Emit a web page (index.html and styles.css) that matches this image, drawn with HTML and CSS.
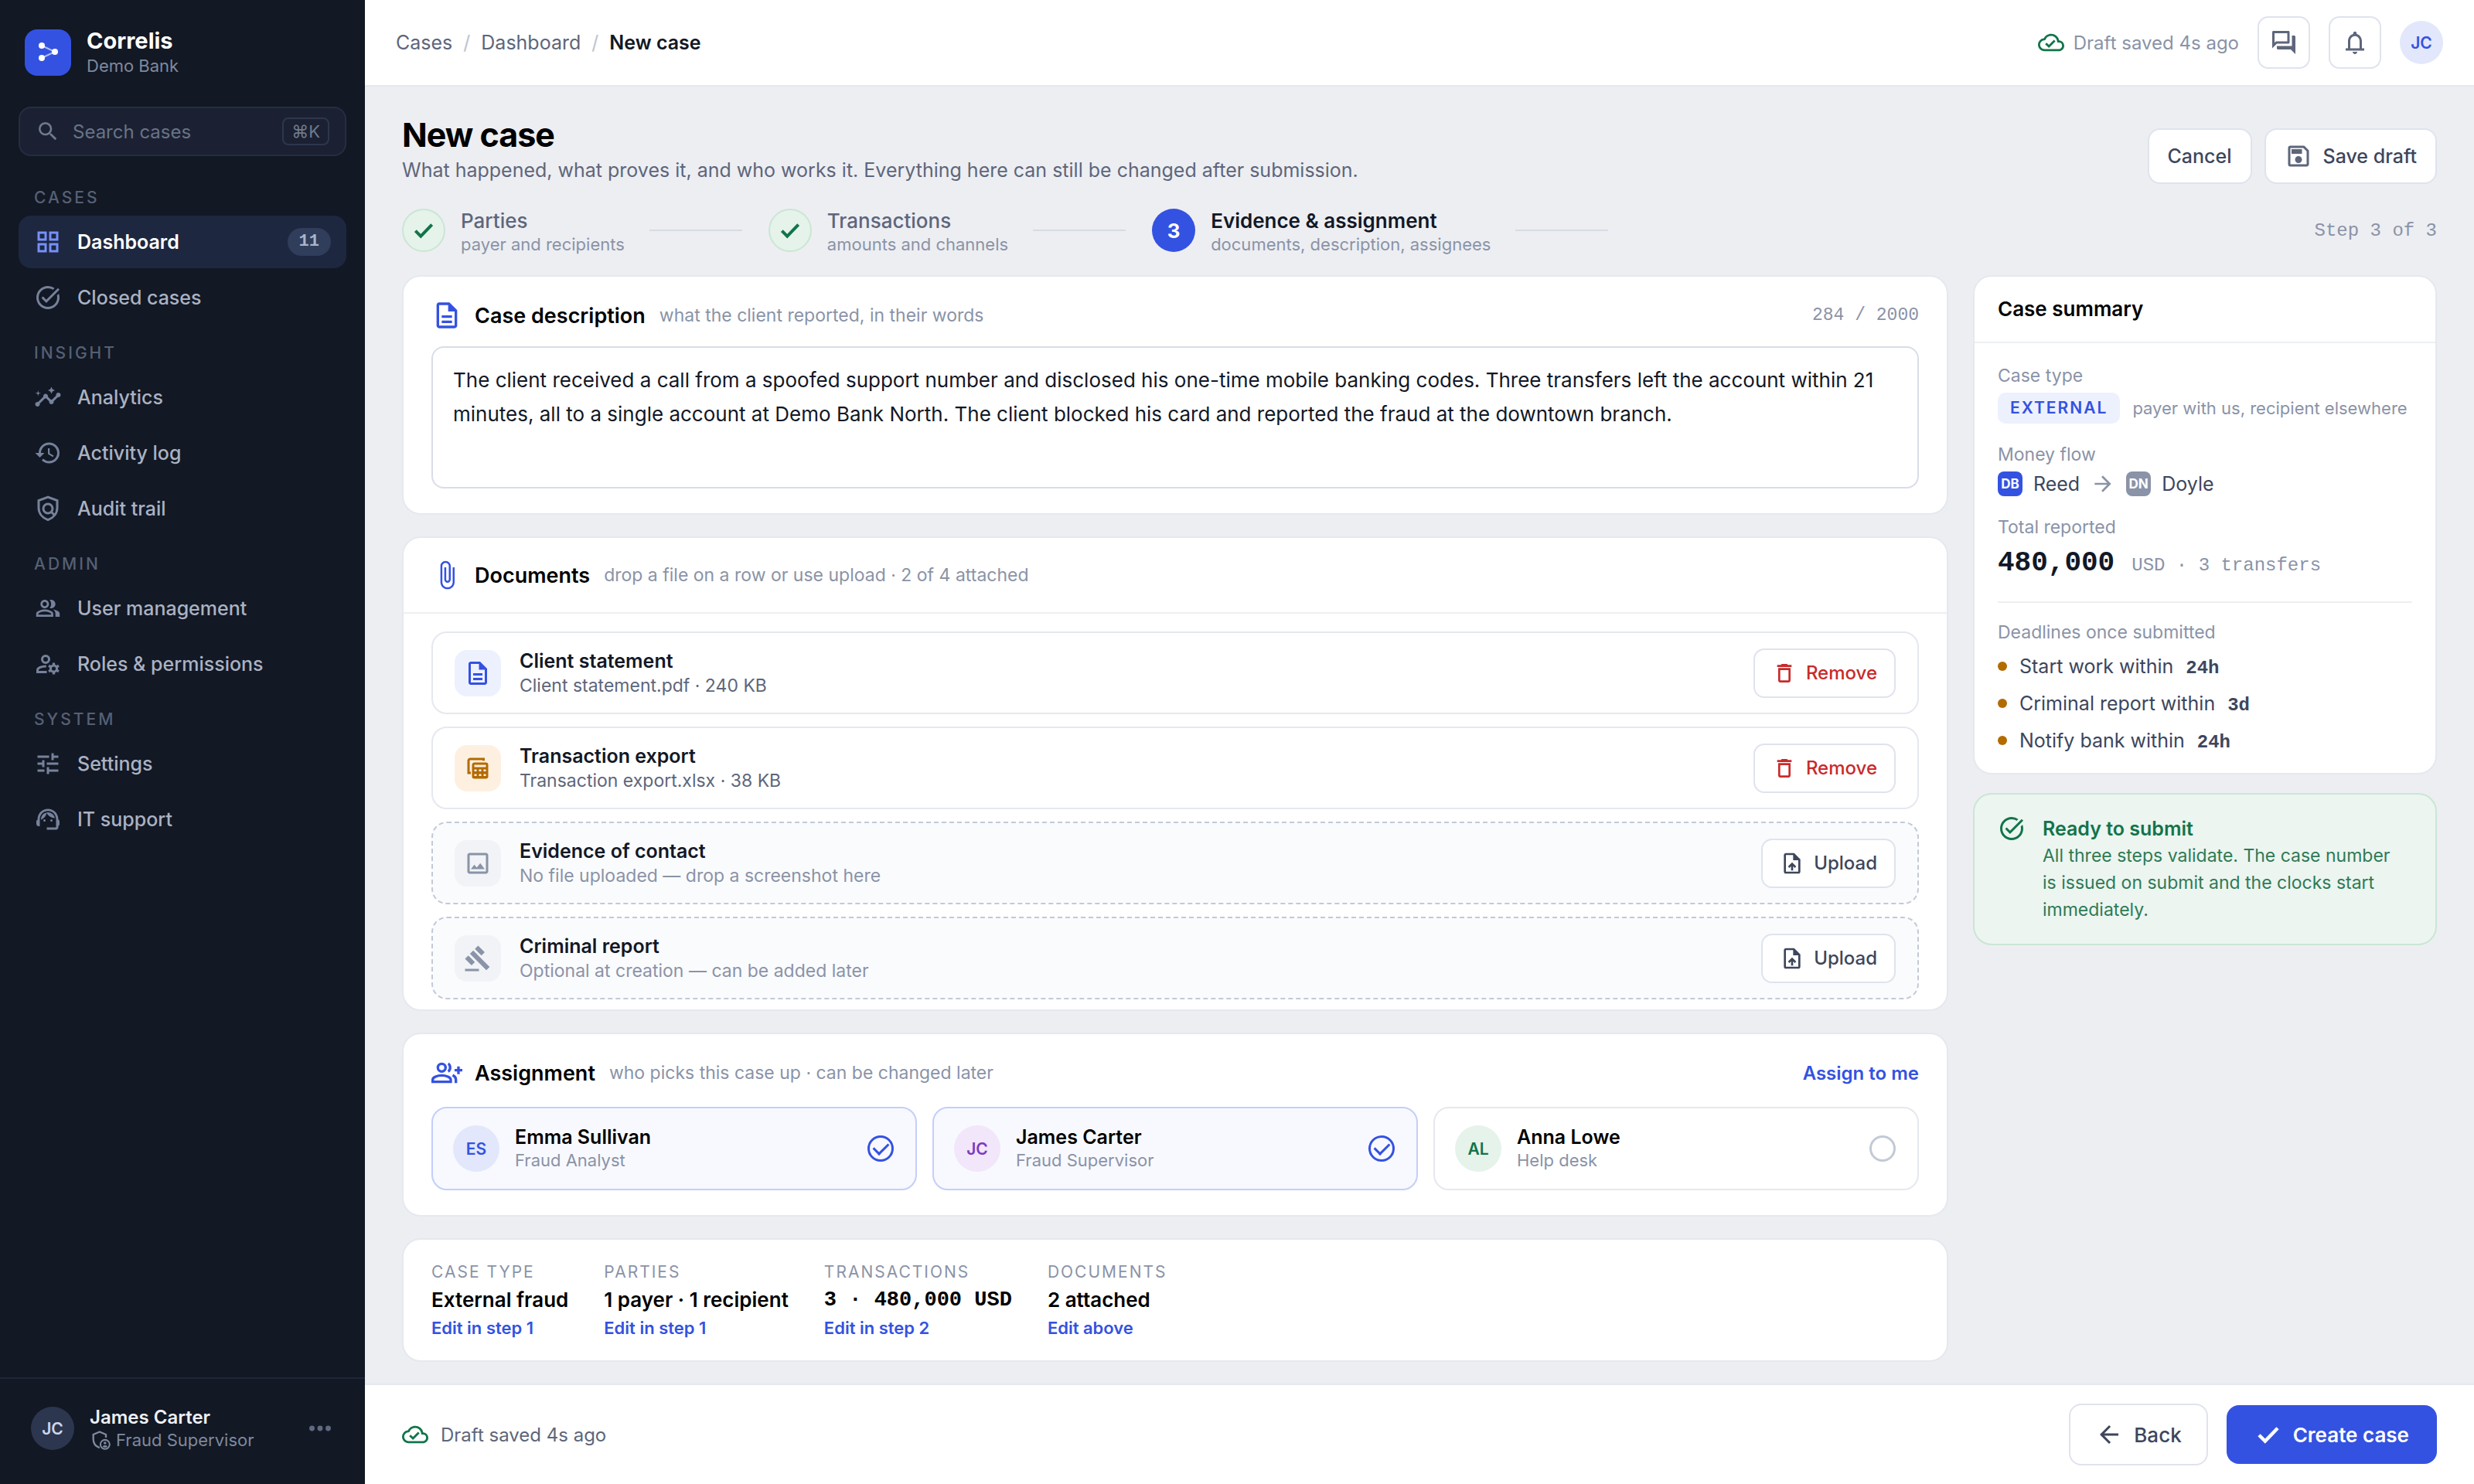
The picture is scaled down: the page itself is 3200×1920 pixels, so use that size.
FILE: index.html
```
<!DOCTYPE html>
<html lang="en">
<head>
  <meta charset="UTF-8" />
  <meta name="viewport" content="width=device-width, initial-scale=1" />
  <title>New case - Correlis</title>
  <link rel="stylesheet" href="styles.css">
</head>
<body>
  <!-- icon sprite -->
  <svg class="sprite" aria-hidden="true">
    <symbol id="i-search" viewBox="0 0 24 24"><path d="M15.5 14h-.79l-.28-.27A6.471 6.471 0 0 0 16 9.5 6.5 6.5 0 1 0 9.5 16c1.61 0 3.09-.59 4.23-1.57l.27.28v.79l5 4.99L20.49 19l-4.99-5zm-6 0C7.01 14 5 11.99 5 9.5S7.01 5 9.5 5 14 7.01 14 9.5 11.99 14 9.5 14z"/></symbol>
    <symbol id="i-grid" viewBox="0 0 24 24"><path d="M3 3v8h8V3H3zm6 6H5V5h4v4zm-6 4v8h8v-8H3zm6 6H5v-4h4v4zm4-16v8h8V3h-8zm6 6h-4V5h4v4zm-6 4v8h8v-8h-8zm6 6h-4v-4h4v4z"/></symbol>
    <symbol id="i-task" viewBox="0 0 24 24"><path d="M22 5.18 10.59 16.6l-4.24-4.24 1.41-1.41 2.83 2.83 10-10L22 5.18zm-2.21 5.04c.13.57.21 1.17.21 1.78 0 4.42-3.58 8-8 8s-8-3.58-8-8 3.58-8 8-8c1.58 0 3.04.46 4.28 1.25l1.44-1.44A9.9 9.9 0 0 0 12 2C6.48 2 2 6.48 2 12s4.48 10 10 10 10-4.48 10-10c0-1.19-.22-2.33-.6-3.39l-1.61 1.61z"/></symbol>
    <symbol id="i-insights" viewBox="0 0 24 24"><path d="M21 8c-1.45 0-2.26 1.44-1.93 2.51l-3.55 3.56c-.3-.09-.74-.09-1.04 0l-2.55-2.55C12.27 10.45 11.46 9 10 9c-1.45 0-2.27 1.44-1.93 2.52l-4.56 4.55C2.44 15.74 1 16.55 1 18c0 1.1.9 2 2 2 1.45 0 2.26-1.44 1.93-2.51l4.55-4.56c.3.09.74.09 1.04 0l2.55 2.55C12.73 16.55 13.54 18 15 18c1.45 0 2.27-1.44 1.93-2.52l3.56-3.55C21.56 12.26 23 11.45 23 10c0-1.1-.9-2-2-2zM15 9l.94-2.07L18 6l-2.06-.93L15 3l-.92 2.07L12 6l2.08.93zM3.5 11 4 9l2-.5L4 8l-.5-2L3 8l-2 .5L3 9z"/></symbol>
    <symbol id="i-history" viewBox="0 0 24 24"><path d="M13 3a9 9 0 0 0-9 9H1l3.89 3.89.07.14L9 12H6c0-3.87 3.13-7 7-7s7 3.13 7 7-3.13 7-7 7c-1.93 0-3.68-.79-4.94-2.06l-1.42 1.42A8.954 8.954 0 0 0 13 21a9 9 0 0 0 0-18zm-1 5v5l4.28 2.54.72-1.21-3.5-2.08V8H12z"/></symbol>
    <symbol id="i-policy" viewBox="0 0 24 24"><g fill="none" stroke="currentColor" stroke-width="2"><path d="M12 2.1 4 5.1V11.300c0 4.700 3.100 8.700 8 10.500 4.900-1.800 8-5.800 8-10.500V5.100z"/><circle cx="12" cy="12" r="4"/><path d="m14.700 14.700 3.300 3.300"/></g></symbol>
    <symbol id="i-people" viewBox="-1 -1 26 26"><path d="M16.67 13.13C18.04 14.06 19 15.32 19 17v3h4v-3c0-2.18-3.57-3.47-6.33-3.87zM15 12c2.21 0 4-1.79 4-4s-1.79-4-4-4c-.47 0-.91.1-1.33.24A5.98 5.98 0 0 1 15 8c0 1.41-.49 2.7-1.3 3.76.41.14.84.24 1.3.24zM9 12c2.21 0 4-1.79 4-4s-1.79-4-4-4-4 1.79-4 4 1.79 4 4 4zm0-6c1.1 0 2 .9 2 2s-.9 2-2 2-2-.9-2-2 .9-2 2-2zM9 13c-2.67 0-8 1.34-8 4v3h16v-3c0-2.66-5.33-4-8-4zm6 5H3v-.99C3.2 16.29 6.3 15 9 15s5.8 1.29 6 2v1z"/></symbol>
    <symbol id="i-roles" viewBox="0 0 24 24"><g fill="none" stroke="currentColor" stroke-width="2"><circle cx="10" cy="8" r="3"/><path d="M10.500 14C6.500 14 3 15.500 3 17.300V19h8"/><circle cx="17" cy="16" r="2.700"/><path stroke-width="2.200" d="M17 11v2.400M17 18.600V21M12.700 13.500l2 1.200M19.300 17.300l2 1.200M12.700 18.500l2-1.200M19.300 14.700l2-1.200"/></g></symbol>
    <symbol id="i-tune" viewBox="0 0 24 24"><path d="M3 17v2h6v-2H3zM3 5v2h10V5H3zm10 16v-2h8v-2h-8v-2h-2v6h2zM7 9v2H3v2h4v2h2V9H7zm14 4v-2H11v2h10zm-6-4h2V7h4V5h-4V3h-2v6z"/></symbol>
    <symbol id="i-support" viewBox="0 0 24 24"><path d="M21 12.22C21 6.73 16.74 3 12 3c-4.690 0-9 3.650-9 9.280-.6.340-1 .980-1 1.720v2c0 1.100.9 2 2 2h1v-6.100c0-3.870 3.130-7 7-7s7 3.130 7 7V19h-8v2h8c1.100 0 2-.9 2-2v-1.220c.590-.310 1-.920 1-1.640v-2.300c0-.7-.410-1.310-1-1.620z"/><circle cx="9" cy="13" r="1"/><circle cx="15" cy="13" r="1"/><path d="M18 11.030A6.040 6.040 0 0 0 12.050 6c-3.030 0-6.290 2.510-6.030 6.450a8.075 8.075 0 0 0 4.860-5.890c1.310 2.630 4 4.440 7.120 4.470z"/></symbol>
    <symbol id="i-admin" viewBox="0 0 24 24"><path fill="none" stroke="currentColor" stroke-width="2" d="M18 9.500V6l-7-3-7 3v5c0 4.500 2.600 8.300 7 9.700"/><path fill-rule="evenodd" d="M17 11a6 6 0 1 0 0 12 6 6 0 0 0 0-12zm0 1.800a4.200 4.200 0 1 1 0 8.400 4.200 4.200 0 0 1 0-8.400z"/><circle cx="17" cy="15.500" r="1.500"/><path d="M14.300 19.200c1.200-1.500 4.200-1.500 5.400 0-1.200 1.400-4.200 1.400-5.400 0z"/></symbol>
    <symbol id="i-more" viewBox="0 0 24 24"><circle cx="5" cy="12" r="2.300"/><circle cx="12" cy="12" r="2.300"/><circle cx="19" cy="12" r="2.300"/></symbol>
    <symbol id="i-cloud" viewBox="0 0 24 24"><path d="M19.35 10.04A7.49 7.49 0 0 0 12 4C9.11 4 6.6 5.64 5.35 8.04A5.994 5.994 0 0 0 0 14c0 3.31 2.69 6 6 6h13c2.76 0 5-2.24 5-5 0-2.64-2.05-4.78-4.65-4.96zM19 18H6c-2.21 0-4-1.79-4-4 0-2.05 1.53-3.76 3.56-3.97l1.07-.11.5-.95A5.469 5.469 0 0 1 12 6c2.62 0 4.88 1.86 5.39 4.43l.3 1.5 1.53.11A2.98 2.98 0 0 1 22 15c0 1.65-1.35 3-3 3zm-9-3.82-2.09-2.09L6.5 13.5 10 17l6.01-6.01-1.41-1.41z"/></symbol>
    <symbol id="i-forum" viewBox="0 0 24 24"><path d="M15 4v7H5.17L4 12.17V4h11m1-2H3c-.55 0-1 .45-1 1v14l4-4h10c.55 0 1-.45 1-1V3c0-.55-.45-1-1-1zm5 4h-2v9H6v2c0 .55.45 1 1 1h11l4 4V7c0-.55-.45-1-1-1z"/></symbol>
    <symbol id="i-bell" viewBox="0 0 24 24"><path d="M12 22c1.1 0 2-.9 2-2h-4c0 1.1.9 2 2 2zm6-5v-6c0-3.07-1.63-5.64-4.5-6.32V4c0-.83-.67-1.5-1.500-1.500s-1.500.67-1.500 1.500v.68C7.640 5.360 6 7.920 6 11v6H4v2h16v-2h-2zm-2 0H8v-6c0-2.480 1.510-4.500 4-4.500s4 2.020 4 4.500v6z"/></symbol>
    <symbol id="i-save" viewBox="0 0 24 24"><path d="M17 3H5a2 2 0 0 0-2 2v14a2 2 0 0 0 2 2h14c1.1 0 2-.9 2-2V7l-4-4zm2 16H5V5h11.17L19 7.83V19zm-7-7c-1.66 0-3 1.34-3 3s1.34 3 3 3 3-1.34 3-3-1.34-3-3-3zM6 6h9v4H6z"/></symbol>
    <symbol id="i-check" viewBox="0 0 24 24"><path fill="none" stroke="currentColor" stroke-width="3" d="m4 12.500 5.200 5.200L20 6.500"/></symbol>
    <symbol id="i-doc" viewBox="0 0 24 24"><path d="M8 16h8v2H8zm0-4h8v2H8zm6-10H6c-1.1 0-2 .9-2 2v16c0 1.1.89 2 1.99 2H18c1.1 0 2-.9 2-2V8l-6-6zm4 18H6V4h7v5h5v11z"/></symbol>
    <symbol id="i-clip" viewBox="0 0 24 24"><path d="M16.5 6v11.5c0 2.21-1.79 4-4 4s-4-1.79-4-4V5a2.5 2.5 0 0 1 5 0v10.5c0 .55-.45 1-1 1s-1-.45-1-1V6H10v9.5a2.5 2.5 0 0 0 5 0V5c0-2.21-1.79-4-4-4S7 2.79 7 5v12.5c0 3.04 2.46 5.5 5.5 5.5s5.5-2.46 5.5-5.5V6h-1.5z"/></symbol>
    <symbol id="i-trash" viewBox="0 0 24 24"><path d="M6 19c0 1.1.9 2 2 2h8c1.1 0 2-.9 2-2V7H6v12zM8 9h8v10H8V9zm7.5-5-1-1h-5l-1 1H5v2h14V4z"/></symbol>
    <symbol id="i-upload" viewBox="0 0 24 24"><path d="M14 2H6c-1.1 0-2 .9-2 2v16c0 1.1.89 2 1.99 2H18c1.1 0 2-.9 2-2V8l-6-6zm4 18H6V4h7v5h5v11zM8 15.01l1.41 1.41L11 14.84V19h2v-4.16l1.59 1.59L16 15.01 12.01 11z"/></symbol>
    <symbol id="i-sheet" viewBox="0 0 24 24"><path fill="none" stroke="currentColor" stroke-width="2" d="M17 5.500V4H5.500A1.500 1.500 0 0 0 4 5.500V16h2"/><path fill-rule="evenodd" d="M9 7h10a2 2 0 0 1 2 2v10a2 2 0 0 1-2 2H9a2 2 0 0 1-2-2V9c0-1.100.9-2 2-2zm0 2v2h10V9zm0 4v1.700h2V13zm4 0v1.700h2V13zm4 0v1.700h2V13zm-8 4v1.700h2V17zm4 0v1.700h2V17zm4 0v1.700h2V17z"/></symbol>
    <symbol id="i-image" viewBox="0 0 24 24"><path d="M19 5v14H5V5h14m0-2H5c-1.1 0-2 .9-2 2v14c0 1.1.9 2 2 2h14c1.1 0 2-.9 2-2V5c0-1.1-.9-2-2-2zm-4.860 8.860-3 3.870L9 13.140 6 17h12l-3.860-5.140z"/></symbol>
    <symbol id="i-gavel" viewBox="0 0 24 24"><path d="M1 21h12v2H1zM5.245 8.070l2.830-2.827 14.140 14.142-2.828 2.828zM12.317 1l5.657 5.656-2.830 2.830-5.654-5.660zM3.825 9.485l5.657 5.657-2.828 2.828-5.657-5.657z"/></symbol>
    <symbol id="i-assign" viewBox="0 0 24 24"><g fill="none" stroke="currentColor" stroke-width="2"><circle cx="8" cy="8" r="3"/><path d="M1 19v-1.800C1 15.500 4.500 14 8 14s7 1.500 7 3.200V19z"/><path d="M13 5c1.800.8 2.300 4.600 0 6M16.500 13.800c1.700.9 2.500 2 2.500 3.400V20M21 7v6M18 10h6"/></g></symbol>
    <symbol id="i-right" viewBox="0 0 24 24"><path d="m12 4-1.410 1.410L16.170 11H4v2h12.170l-5.580 5.590L12 20l8-8z"/></symbol>
    <symbol id="i-left" viewBox="0 0 24 24"><path d="M20 11H7.830l5.590-5.590L12 4l-8 8 8 8 1.410-1.410L7.830 13H20v-2z"/></symbol>
  </svg>

  <div class="app">
    <aside class="sidebar">
      <div class="brand">
        <svg class="logo" viewBox="0 0 60 60" aria-hidden="true">
          <path d="M22 21 39 29 22 37" fill="none" stroke="#aebcf6" stroke-width="2"/>
          <circle cx="22" cy="21" r="4"/><circle cx="39" cy="29" r="4"/><circle cx="22" cy="37" r="4"/>
        </svg>
        <div>
          <div class="brand-name">Correlis</div>
          <div class="brand-org">Demo Bank</div>
        </div>
      </div>

      <label class="search">
        <svg class="icon icon-sm"><use href="#i-search"/></svg>
        <input type="search" placeholder="Search cases" aria-label="Search cases">
        <kbd>⌘K</kbd>
      </label>

      <nav class="nav">
        <h2>Cases</h2>
        <a class="active" href="#"><svg class="icon"><use href="#i-grid"/></svg>Dashboard<span class="count">11</span></a>
        <a href="#"><svg class="icon"><use href="#i-task"/></svg>Closed cases</a>
        <h2>Insight</h2>
        <a href="#"><svg class="icon"><use href="#i-insights"/></svg>Analytics</a>
        <a href="#"><svg class="icon"><use href="#i-history"/></svg>Activity log</a>
        <a href="#"><svg class="icon"><use href="#i-policy"/></svg>Audit trail</a>
        <h2>Admin</h2>
        <a href="#"><svg class="icon"><use href="#i-people"/></svg>User management</a>
        <a href="#"><svg class="icon"><use href="#i-roles"/></svg>Roles &amp; permissions</a>
        <h2>System</h2>
        <a href="#"><svg class="icon"><use href="#i-tune"/></svg>Settings</a>
        <a href="#"><svg class="icon"><use href="#i-support"/></svg>IT support</a>
      </nav>

      <div class="account">
        <span class="avatar avatar-dark">JC</span>
        <div class="account-text">
          <div class="account-name">James Carter</div>
          <div class="account-role"><svg class="icon icon-xs"><use href="#i-admin"/></svg>Fraud Supervisor</div>
        </div>
        <button class="more" aria-label="Account menu"><svg class="icon"><use href="#i-more"/></svg></button>
      </div>
    </aside>

    <div class="page">
      <header class="topbar">
        <nav class="crumbs" aria-label="Breadcrumb">
          <a href="#">Cases</a><i>/</i><a href="#">Dashboard</a><i>/</i><strong>New case</strong>
        </nav>
        <div class="topbar-right">
          <span class="saved muted"><svg class="icon"><use href="#i-cloud"/></svg>Draft saved 4s ago</span>
          <button class="icon-btn" aria-label="Messages"><svg class="icon"><use href="#i-forum"/></svg></button>
          <button class="icon-btn" aria-label="Notifications"><svg class="icon"><use href="#i-bell"/></svg></button>
          <span class="avatar avatar-blue">JC</span>
        </div>
      </header>

      <main class="content">
        <div class="page-head">
          <div>
            <h1>New case</h1>
            <p>What happened, what proves it, and who works it. Everything here can still be changed after submission.</p>
          </div>
          <div class="head-actions">
            <button class="btn">Cancel</button>
            <button class="btn"><svg class="icon"><use href="#i-save"/></svg>Save draft</button>
          </div>
        </div>

        <div class="stepper">
          <ol>
            <li class="done">
              <span class="dot"><svg class="icon icon-sm"><use href="#i-check"/></svg></span>
              <div><b>Parties</b><small>payer and recipients</small></div>
            </li>
            <li class="done">
              <span class="dot"><svg class="icon icon-sm"><use href="#i-check"/></svg></span>
              <div><b>Transactions</b><small>amounts and channels</small></div>
            </li>
            <li class="current">
              <span class="dot">3</span>
              <div><b>Evidence &amp; assignment</b><small>documents, description, assignees</small></div>
            </li>
          </ol>
          <span class="step-count">Step 3 of 3</span>
        </div>

        <div class="columns">
          <div class="col-main">
            <section class="card padded">
              <div class="card-head">
                <svg class="icon icon-lg"><use href="#i-doc"/></svg>
                <h2><label for="description">Case description</label></h2>
                <span class="hint">what the client reported, in their words</span>
                <span class="counter">284 / 2000</span>
              </div>
              <textarea id="description" rows="3">The client received a call from a spoofed support number and disclosed his one-time mobile banking codes. Three transfers left the account within 21 minutes, all to a single account at Demo Bank North. The client blocked his card and reported the fraud at the downtown branch.</textarea>
            </section>

            <section class="card">
              <div class="card-head ruled">
                <svg class="icon icon-lg"><use href="#i-clip"/></svg>
                <h2>Documents</h2>
                <span class="hint">drop a file on a row or use upload · 2 of 4 attached</span>
              </div>
              <ul class="docs">
                <li>
                  <span class="tile tile-blue"><svg class="icon"><use href="#i-doc"/></svg></span>
                  <div class="doc-text"><b>Client statement</b><span>Client statement.pdf · 240 KB</span></div>
                  <button class="btn btn-sm danger"><svg class="icon"><use href="#i-trash"/></svg>Remove</button>
                </li>
                <li>
                  <span class="tile tile-amber"><svg class="icon"><use href="#i-sheet"/></svg></span>
                  <div class="doc-text"><b>Transaction export</b><span>Transaction export.xlsx · 38 KB</span></div>
                  <button class="btn btn-sm danger"><svg class="icon"><use href="#i-trash"/></svg>Remove</button>
                </li>
                <li class="empty">
                  <span class="tile"><svg class="icon"><use href="#i-image"/></svg></span>
                  <div class="doc-text"><b>Evidence of contact</b><span>No file uploaded — drop a screenshot here</span></div>
                  <button class="btn btn-sm"><svg class="icon"><use href="#i-upload"/></svg>Upload</button>
                </li>
                <li class="empty">
                  <span class="tile"><svg class="icon"><use href="#i-gavel"/></svg></span>
                  <div class="doc-text"><b>Criminal report</b><span>Optional at creation — can be added later</span></div>
                  <button class="btn btn-sm"><svg class="icon"><use href="#i-upload"/></svg>Upload</button>
                </li>
              </ul>
            </section>

            <section class="card padded">
              <div class="card-head">
                <svg class="icon icon-lg"><use href="#i-assign"/></svg>
                <h2>Assignment</h2>
                <span class="hint">who picks this case up · can be changed later</span>
                <button class="link-btn">Assign to me</button>
              </div>
              <div class="people">
                <label class="person">
                  <span class="avatar avatar-lg avatar-blue">ES</span>
                  <span class="person-text"><b>Emma Sullivan</b><small>Fraud Analyst</small></span>
                  <input type="checkbox" checked>
                </label>
                <label class="person">
                  <span class="avatar avatar-lg avatar-purple">JC</span>
                  <span class="person-text"><b>James Carter</b><small>Fraud Supervisor</small></span>
                  <input type="checkbox" checked>
                </label>
                <label class="person">
                  <span class="avatar avatar-lg avatar-green">AL</span>
                  <span class="person-text"><b>Anna Lowe</b><small>Help desk</small></span>
                  <input type="checkbox">
                </label>
              </div>
            </section>

            <section class="card recap">
              <div><small>Case type</small><b>External fraud</b><a href="#">Edit in step 1</a></div>
              <div><small>Parties</small><b>1 payer · 1 recipient</b><a href="#">Edit in step 1</a></div>
              <div><small>Transactions</small><b class="mono">3 · 480,000 USD</b><a href="#">Edit in step 2</a></div>
              <div><small>Documents</small><b>2 attached</b><a href="#">Edit above</a></div>
            </section>
          </div>

          <aside class="col-side">
            <section class="card">
              <h2 class="summary-title">Case summary</h2>
              <div class="summary">
                <div class="field">
                  <span class="field-label">Case type</span>
                  <div class="type-row"><span class="tag">External</span><span>payer with us, recipient elsewhere</span></div>
                </div>
                <div class="field">
                  <span class="field-label">Money flow</span>
                  <div class="flow">
                    <span class="bank">DB</span>Reed
                    <svg class="icon icon-sm"><use href="#i-right"/></svg>
                    <span class="bank bank-gray">DN</span>Doyle
                  </div>
                </div>
                <div class="field">
                  <span class="field-label">Total reported</span>
                  <div class="total"><b>480,000</b><span>USD · 3 transfers</span></div>
                </div>
                <div class="deadlines">
                  <span class="field-label">Deadlines once submitted</span>
                  <ul>
                    <li>Start work within <b>24h</b></li>
                    <li>Criminal report within <b>3d</b></li>
                    <li>Notify bank within <b>24h</b></li>
                  </ul>
                </div>
              </div>
            </section>

            <section class="ready">
              <svg class="icon"><use href="#i-task"/></svg>
              <div>
                <h3>Ready to submit</h3>
                <p>All three steps validate. The case number is issued on submit and the clocks start immediately.</p>
              </div>
            </section>
          </aside>
        </div>
      </main>

      <footer class="actions">
        <span class="saved"><svg class="icon"><use href="#i-cloud"/></svg>Draft saved 4s ago</span>
        <div class="actions-right">
          <button class="btn btn-lg"><svg class="icon"><use href="#i-left"/></svg>Back</button>
          <button class="btn btn-lg primary"><svg class="icon"><use href="#i-check"/></svg>Create case</button>
        </div>
      </footer>
    </div>
  </div>
</body>
</html>
```
FILE: styles.css
```
:root {
  --blue: #3452e1;
  --green: #12744a;
  --ink: #121826;
  --text: #3d465c;
  --soft: #5d667b;
  --muted: #8a93a7;
  --line: #e5e8ef;
  --line-strong: #dfe3ed;
  --mono: "Liberation Mono", monospace;
}
* {
  margin: 0;
  padding: 0;
  box-sizing: border-box;
}
body {
  font-family: Inter, sans-serif;
  font-size: 25px;
  color: var(--ink);
  background: #edeef2;
}
button, input, textarea {
  font: inherit;
  color: inherit;
}
button {
  cursor: pointer;
}
a {
  color: inherit;
  text-decoration: none;
}
ul, ol {
  list-style: none;
}
.sprite {
  position: absolute;
  width: 0;
  height: 0;
}
.icon {
  width: 36px;
  height: 36px;
  flex: none;
  fill: currentColor;
}
.icon-xs {
  width: 28px;
  height: 28px;
}
.icon-sm {
  width: 32px;
  height: 32px;
}
.icon-lg {
  width: 40px;
  height: 40px;
}
.app {
  display: flex;
  min-height: 100vh;
}

/* sidebar */
.sidebar {
  position: sticky;
  top: 0;
  display: flex;
  flex-direction: column;
  width: 472px;
  height: 100vh;
  flex: none;
  background: #121824;
  color: #aab2c3;
}
.brand {
  display: flex;
  align-items: center;
  gap: 20px;
  padding: 36px 32px 0;
}
.logo {
  width: 60px;
  height: 60px;
  border-radius: 16px;
  background: var(--blue);
  fill: #fff;
}
.brand-name {
  font-size: 29px;
  line-height: 34px;
  font-weight: 700;
  color: #fff;
}
.brand-org {
  font-size: 22px;
  line-height: 30px;
  color: #7f899d;
}
.search {
  display: flex;
  align-items: center;
  gap: 16px;
  height: 64px;
  margin: 38px 24px 0;
  padding: 0 20px;
  border: 2px solid #252e41;
  border-radius: 16px;
  background: #1b2132;
  color: #6f7a8f;
}
.search input {
  flex: 1;
  min-width: 0;
  border: none;
  outline: none;
  background: none;
  font-size: 24px;
}
.search input::placeholder {
  color: #687388;
}
.search kbd {
  height: 36px;
  padding: 0 10px;
  border: 2px solid #2c374e;
  border-radius: 8px;
  font: 22px/32px Inter, "DejaVu Sans", sans-serif;
}
.nav {
  flex: 1;
  padding: 16px 24px 0;
}
.nav h2 {
  padding: 24px 20px 9px;
  font-size: 21px;
  line-height: 28px;
  font-weight: 500;
  letter-spacing: 3px;
  text-transform: uppercase;
  color: #566074;
}
.nav a {
  display: flex;
  align-items: center;
  gap: 20px;
  height: 68px;
  padding: 0 20px;
  border-radius: 16px;
  font-weight: 500;
}
.nav a + a {
  margin-top: 4px;
}
.nav .icon {
  color: #76829b;
}
.nav .active {
  background: #1e2740;
  color: #fff;
  font-weight: 600;
}
.nav .active .icon {
  color: #7590fa;
}
.count {
  margin-left: auto;
  padding: 0 15px;
  border-radius: 18px;
  background: #303d5b;
  color: #a9b4ca;
  font: 700 22px/36px var(--mono);
}
.account {
  display: flex;
  align-items: center;
  gap: 20px;
  height: 138px;
  padding: 0 40px 8px;
  border-top: 2px solid #1e2638;
}
.account-text {
  flex: 1;
}
.account-name {
  font-size: 24px;
  line-height: 30px;
  font-weight: 600;
  color: #eef0f6;
}
.account-role {
  display: flex;
  align-items: center;
  gap: 6px;
  font-size: 22px;
  line-height: 28px;
  color: #7f899d;
}
.more {
  display: flex;
  border: none;
  background: none;
  color: #5f6a80;
}
.avatar {
  display: flex;
  align-items: center;
  justify-content: center;
  width: 56px;
  height: 56px;
  flex: none;
  border-radius: 50%;
  font-size: 21px;
  font-weight: 600;
}
.avatar-lg {
  width: 60px;
  height: 60px;
}
.avatar-dark {
  background: #2c364f;
  color: #ccd5ea;
}
.avatar-blue {
  background: #e2e7fb;
  color: var(--blue);
}
.avatar-purple {
  background: #f1e6fa;
  color: #7e3bc0;
}
.avatar-green {
  background: #e5f3ea;
  color: var(--green);
}

/* top bar */
.page {
  display: flex;
  flex-direction: column;
  flex: 1;
  min-width: 0;
}
.topbar {
  display: flex;
  align-items: center;
  justify-content: space-between;
  height: 112px;
  padding: 0 40px;
  border-bottom: 2px solid var(--line);
  background: #fff;
}
.crumbs {
  display: flex;
  gap: 14px;
  color: var(--soft);
}
.crumbs i {
  font-style: normal;
  color: #bcc3d0;
}
.crumbs strong {
  font-weight: 600;
  color: var(--ink);
}
.topbar-right {
  display: flex;
  align-items: center;
  gap: 24px;
}
.saved {
  display: flex;
  align-items: center;
  gap: 16px;
  font-size: 24px;
  color: var(--soft);
}
.saved.muted {
  gap: 12px;
  color: var(--muted);
}
.saved .icon {
  width: 34px;
  color: var(--green);
}
.icon-btn {
  display: flex;
  align-items: center;
  justify-content: center;
  width: 68px;
  height: 68px;
  border: 2px solid var(--line-strong);
  border-radius: 14px;
  background: #fff;
  color: var(--soft);
}

/* page head */
.content {
  flex: 1;
  padding: 36px 48px 28px;
}
.page-head {
  display: flex;
  align-items: flex-end;
  justify-content: space-between;
}
h1 {
  margin-bottom: 2px;
  font-size: 43px;
  line-height: 52px;
  font-weight: 700;
  letter-spacing: -1px;
  color: #000;
}
.page-head p {
  line-height: 36px;
  color: var(--soft);
}
.head-actions {
  display: flex;
  gap: 16px;
}
.btn {
  display: flex;
  align-items: center;
  justify-content: center;
  gap: 14px;
  height: 72px;
  padding: 0 24px;
  border: 2px solid var(--line-strong);
  border-radius: 16px;
  background: #fff;
  font-weight: 500;
  color: var(--text);
}
.btn .icon {
  color: var(--soft);
}
.btn-sm {
  gap: 12px;
  height: 64px;
  padding: 0 22px;
  border-radius: 14px;
  font-size: 24px;
}
.btn-sm .icon {
  width: 32px;
  height: 32px;
  color: inherit;
}
.btn.danger {
  color: #c92a2a;
}
.btn-lg {
  height: 80px;
  padding: 0 32px;
  font-size: 26px;
}
.btn-lg .icon {
  color: inherit;
}
.btn.primary {
  height: 76px;
  padding: 0 36px;
  border: none;
  background: var(--blue);
  color: #fff;
  font-weight: 600;
}

/* stepper */
.stepper {
  display: flex;
  align-items: center;
  justify-content: space-between;
  margin: 27px 0 25px;
}
.stepper ol {
  display: flex;
  gap: 34px;
}
.stepper li {
  display: flex;
  align-items: center;
  gap: 20px;
}
.stepper li div {
  padding-top: 6px;
}
.stepper li::after {
  content: "";
  width: 120px;
  height: 2px;
  margin-left: 12px;
  background: #d6dae4;
}
.dot {
  display: flex;
  align-items: center;
  justify-content: center;
  width: 56px;
  height: 56px;
  border-radius: 50%;
  background: var(--blue);
  color: #fff;
  font-size: 26px;
  font-weight: 700;
}
.done .dot {
  border: 2px solid #c9e6d5;
  background: #e5f3ea;
  color: var(--green);
}
.stepper b, .stepper small {
  display: block;
  line-height: 30px;
}
.stepper b {
  font-size: 26px;
  font-weight: 500;
  color: var(--soft);
}
.stepper .current b {
  font-weight: 600;
  color: var(--ink);
}
.stepper small {
  font-size: 22px;
  color: var(--muted);
}
.step-count {
  font: 24px var(--mono);
  color: var(--muted);
}

/* cards */
.columns {
  display: grid;
  grid-template-columns: minmax(0, 1fr) 600px;
  align-items: start;
  gap: 32px;
}
.col-main {
  display: grid;
  gap: 28px;
}
.col-side {
  display: grid;
  gap: 24px;
}
.card {
  border: 2px solid var(--line);
  border-radius: 24px;
  background: #fff;
}
.padded {
  padding: 32px 36px;
}
.card-head {
  display: flex;
  align-items: center;
  height: 36px;
  color: var(--blue);
}
.card-head h2 {
  margin: 0 18px 0 16px;
}
.card h2 {
  font-size: 27px;
  font-weight: 600;
  color: #000;
}
.card-head.ruled {
  height: 98px;
  padding: 0 36px;
  border-bottom: 2px solid #edeff3;
}
.hint {
  font-size: 23px;
  color: var(--muted);
}
.counter {
  margin-left: auto;
  font: 23px var(--mono);
  color: var(--muted);
}
.link-btn {
  margin-left: auto;
  border: none;
  background: none;
  font-size: 24px;
  font-weight: 600;
  color: var(--blue);
}
textarea {
  display: block;
  width: 100%;
  height: 184px;
  margin-top: 22px;
  padding: 20px 26px;
  border: 2px solid #d8dde7;
  border-radius: 16px;
  outline: none;
  resize: none;
  font-size: 26px;
  line-height: 44px;
}
.docs {
  display: grid;
  gap: 16px;
  padding: 23px 36px 13px;
}
.docs li {
  display: flex;
  align-items: center;
  gap: 24px;
  height: 107px;
  padding: 0 28px;
  border: 2px solid var(--line);
  border-radius: 20px;
}
.docs .empty {
  border: 2px dashed #c3c9d7;
  background: #fafbfd;
}
.tile {
  display: flex;
  align-items: center;
  justify-content: center;
  width: 60px;
  height: 60px;
  border-radius: 16px;
  background: #f1f3f7;
  color: var(--muted);
}
.tile-blue {
  background: #edf1fe;
  color: var(--blue);
}
.tile-amber {
  background: #fef0e0;
  color: #b36b00;
}
.doc-text {
  flex: 1;
}
.doc-text b, .doc-text span {
  display: block;
  line-height: 32px;
}
.doc-text b {
  font-weight: 600;
}
.doc-text span {
  font-size: 23px;
  color: var(--soft);
}
.empty .doc-text span {
  color: var(--muted);
}
.people {
  display: grid;
  grid-template-columns: repeat(3, 1fr);
  gap: 20px;
  margin-top: 26px;
}
.person {
  display: flex;
  align-items: center;
  gap: 20px;
  height: 108px;
  padding: 0 28px 0 26px;
  border: 2px solid var(--line);
  border-radius: 20px;
  cursor: pointer;
}
.person:has(:checked) {
  border-color: #c3cffa;
  background: #f8f9fe;
}
.person-text {
  flex: 1;
}
.person-text b, .person-text small {
  display: block;
  line-height: 30px;
}
.person-text b {
  font-weight: 600;
  color: #000;
}
.person-text small {
  font-size: 22px;
  color: var(--muted);
}
.person input {
  display: grid;
  place-items: center;
  width: 34px;
  height: 34px;
  appearance: none;
  border: 3px solid #c3c9d7;
  border-radius: 50%;
}
.person input:checked {
  border-color: var(--blue);
}
.person input:checked::after {
  content: "";
  width: 16px;
  height: 9px;
  margin-bottom: 4px;
  border: solid var(--blue);
  border-width: 0 0 3px 3px;
  rotate: -45deg;
}
.recap {
  display: flex;
  gap: 46px;
  padding: 28px 36px;
}
.recap small, .recap b, .recap a {
  display: block;
  font-size: 22px;
  line-height: 28px;
}
.recap small {
  font-size: 21px;
  letter-spacing: 2px;
  text-transform: uppercase;
  color: var(--muted);
}
.recap b {
  font-size: 26px;
  line-height: 44px;
  font-weight: 600;
  color: #000;
}
.recap .mono {
  font-family: var(--mono);
  font-size: 27px;
}
.recap a {
  font-weight: 600;
  color: var(--blue);
}

/* summary column */
.card .summary-title {
  padding: 0 30px;
  border-bottom: 2px solid #edeff3;
  font-size: 26px;
  line-height: 84px;
}
.summary {
  padding: 28px 30px 26px;
}
.field {
  margin-bottom: 26px;
}
.field-label {
  display: block;
  margin-bottom: 8px;
  font-size: 23px;
  line-height: 28px;
  color: var(--muted);
}
.type-row {
  display: flex;
  align-items: center;
  gap: 16px;
  font-size: 22px;
  white-space: nowrap;
  color: var(--muted);
}
.tag {
  padding: 0 16px;
  border-radius: 10px;
  background: #edf1fe;
  font-size: 21px;
  line-height: 40px;
  font-weight: 600;
  letter-spacing: 2px;
  text-transform: uppercase;
  color: var(--blue);
}
.flow {
  display: flex;
  align-items: center;
  gap: 14px;
  height: 32px;
  color: var(--text);
}
.flow .icon {
  color: var(--muted);
}
.bank {
  width: 32px;
  border-radius: 8px;
  background: var(--blue);
  font-size: 17px;
  line-height: 32px;
  font-weight: 700;
  text-align: center;
  color: #fff;
}
.bank-gray {
  background: #8a93a7;
}
.total {
  display: flex;
  align-items: baseline;
  gap: 22px;
  height: 48px;
  font: 24px/50px var(--mono);
  color: var(--muted);
}
.total b {
  font-size: 36px;
  color: var(--ink);
}
.deadlines {
  padding-top: 24px;
  border-top: 2px solid #edeff3;
}
.deadlines ul {
  display: grid;
  gap: 16px;
  padding-top: 6px;
}
.deadlines li {
  display: flex;
  align-items: center;
  gap: 16px;
  height: 32px;
  color: var(--text);
}
.deadlines li::before {
  content: "";
  width: 12px;
  height: 12px;
  border-radius: 50%;
  background: #b36b00;
}
.deadlines b {
  padding-top: 4px;
  font: 700 24px var(--mono);
}
.ready {
  display: flex;
  gap: 22px;
  padding: 26px 40px 26px 30px;
  border: 2px solid #c9e6d5;
  border-radius: 24px;
  background: #ecf5f0;
  color: var(--green);
}
.ready h3 {
  font-size: 25px;
  line-height: 36px;
  font-weight: 600;
}
.ready p {
  font-size: 23px;
  line-height: 35px;
  color: #2f7a55;
}

/* bottom bar */
.actions {
  display: flex;
  align-items: center;
  justify-content: space-between;
  height: 130px;
  padding: 0 48px;
  border-top: 2px solid var(--line);
  background: #fff;
}
.actions-right {
  display: flex;
  align-items: center;
  gap: 24px;
}
```
